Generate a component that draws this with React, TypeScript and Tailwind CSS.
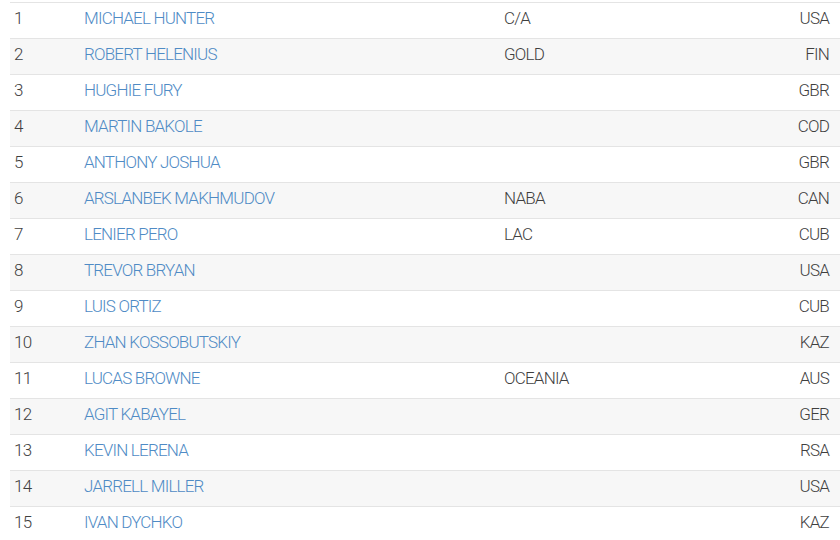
const rankings = [
  { rank: 1, name: "MICHAEL HUNTER", title: "C/A", country: "USA" },
  { rank: 2, name: "ROBERT HELENIUS", title: "GOLD", country: "FIN" },
  { rank: 3, name: "HUGHIE FURY", title: "", country: "GBR" },
  { rank: 4, name: "MARTIN BAKOLE", title: "", country: "COD" },
  { rank: 5, name: "ANTHONY JOSHUA", title: "", country: "GBR" },
  { rank: 6, name: "ARSLANBEK MAKHMUDOV", title: "NABA", country: "CAN" },
  { rank: 7, name: "LENIER PERO", title: "LAC", country: "CUB" },
  { rank: 8, name: "TREVOR BRYAN", title: "", country: "USA" },
  { rank: 9, name: "LUIS ORTIZ", title: "", country: "CUB" },
  { rank: 10, name: "ZHAN KOSSOBUTSKIY", title: "", country: "KAZ" },
  { rank: 11, name: "LUCAS BROWNE", title: "OCEANIA", country: "AUS" },
  { rank: 12, name: "AGIT KABAYEL", title: "", country: "GER" },
  { rank: 13, name: "KEVIN LERENA", title: "", country: "RSA" },
  { rank: 14, name: "JARRELL MILLER", title: "", country: "USA" },
  { rank: 15, name: "IVAN DYCHKO", title: "", country: "KAZ" },
];

export default function App() {
  return (
    <div className="w-[840px] h-[540px] overflow-hidden bg-white pl-[10px] pt-[2px] font-['Roboto',sans-serif] font-light text-[17px] tracking-[-0.8px] text-[#3f3f3f]">
      <table className="w-full border-collapse table-fixed">
        <colgroup>
          <col className="w-[74px]" />
          <col className="w-[420px]" />
          <col className="w-[200px]" />
          <col />
        </colgroup>
        <tbody>
          {rankings.map((r, i) => (
            <tr
              key={r.rank}
              className={`h-[36px] border-t border-[#e4e4e4] ${i % 2 === 1 ? "bg-[#f7f7f7]" : "bg-white"}`}
            >
              <td className="pl-[4px] pb-[4px] align-middle">{r.rank}</td>
              <td className="pb-[4px] align-middle">
                <a href="#" className="text-[#4f8bc5]">
                  {r.name}
                </a>
              </td>
              <td className="pb-[4px] align-middle">{r.title}</td>
              <td className="pr-[11px] pb-[4px] text-right align-middle">{r.country}</td>
            </tr>
          ))}
        </tbody>
      </table>
    </div>
  );
}
